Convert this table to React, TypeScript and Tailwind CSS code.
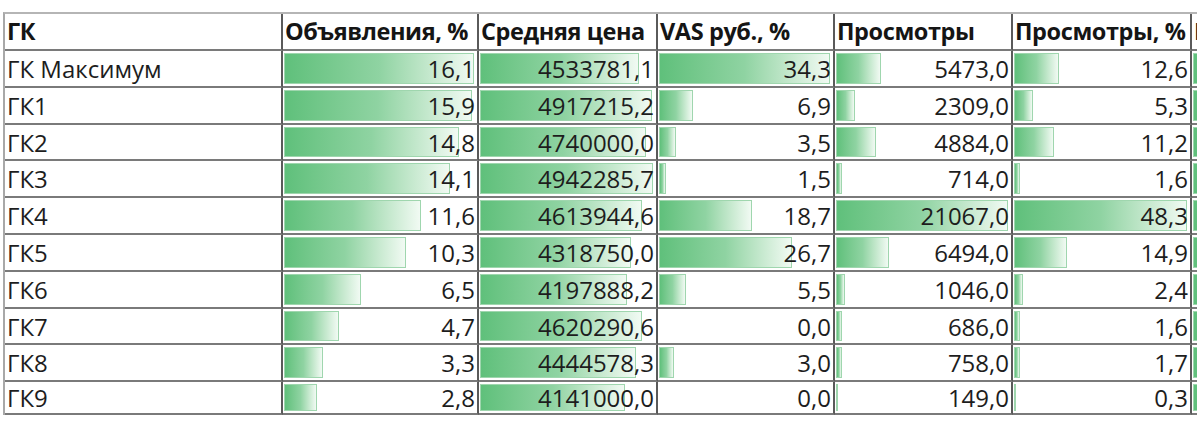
import React from "react";

type Row = [string, number, number, number, number, number, number];

const rows: Row[] = [
  ["ГК Максимум", 16.1, 4533781.1, 34.3, 5473.0, 12.6, 0.6],
  ["ГК1", 15.9, 4917215.2, 6.9, 2309.0, 5.3, 0.6],
  ["ГК2", 14.8, 4740000.0, 3.5, 4884.0, 11.2, 0.6],
  ["ГК3", 14.1, 4942285.7, 1.5, 714.0, 1.6, 0.6],
  ["ГК4", 11.6, 4613944.6, 18.7, 21067.0, 48.3, 0.6],
  ["ГК5", 10.3, 4318750.0, 26.7, 6494.0, 14.9, 0.6],
  ["ГК6", 6.5, 4197888.2, 5.5, 1046.0, 2.4, 0.6],
  ["ГК7", 4.7, 4620290.6, 0.0, 686.0, 1.6, 0.6],
  ["ГК8", 3.3, 4444578.3, 3.0, 758.0, 1.7, 0.6],
  ["ГК9", 2.8, 4141000.0, 0.0, 149.0, 0.3, 0.6],
];

const headers = [
  "ГК",
  "Объявления, %",
  "Средняя цена",
  "VAS руб., %",
  "Просмотры",
  "Просмотры, %",
  "Просмотры, руб",
];

const widths = [278, 196, 179, 177, 178, 179, 200];
const rowHeights = [37, 37, 36, 37, 37, 37, 37, 36, 37, 33];

const fmt = (v: number) => v.toFixed(1).replace(".", ",");

export default function App() {
  const maxes = [1, 2, 3, 4, 5, 6].map((c) =>
    Math.max(...rows.map((r) => r[c] as number))
  );
  const font = { fontFamily: '"Open Sans", "Noto Sans", sans-serif' };
  return (
    <div className="w-[1197px] h-[425px] overflow-hidden bg-white" style={font}>
      <div className="ml-[3px] mt-[12px] w-[1400px]">
        <div className="grid grid-cols-[278px_196px_179px_177px_178px_179px_200px] border-t-2 border-l-2 border-t-[#b5b5b5] border-l-[#a8a8a8]">
          {headers.map((h) => (
            <div
              key={h}
              className="h-[37px] border-r-2 border-b-2 border-r-[#5a5a5a] border-b-[#7a7a7a] flex items-center pl-[2px] overflow-hidden whitespace-nowrap text-[23.5px] font-bold text-[#151515] tracking-[-0.4px]"
            >
              {h}
            </div>
          ))}
          {rows.map((r, ri) => (
            <React.Fragment key={r[0]}>
              <div
                className="border-r-2 border-b-2 border-r-[#5a5a5a] border-b-[#7a7a7a] flex items-center pl-[2px] pt-[1px] text-[24px] text-[#1d1d1d] whitespace-nowrap"
                style={{ height: rowHeights[ri] }}
              >
                {r[0]}
              </div>
              {[1, 2, 3, 4, 5, 6].map((c) => {
                const v = r[c] as number;
                const maxLen = widths[c] - 6;
                const len = v > 0 ? Math.max(1.5, (v / maxes[c - 1]) * maxLen) : 0;
                return (
                  <div
                    key={c}
                    className="relative border-r-2 border-b-2 border-r-[#5a5a5a] border-b-[#7a7a7a] flex items-center justify-end pr-[2px] pt-[1px] text-[24px] text-[#1d1d1d] whitespace-nowrap"
                    style={{ height: rowHeights[ri] }}
                  >
                    {len > 0 && (
                      <div
                        className="absolute left-[1px] top-[2px] bottom-[2px] border border-[#9fd6ae] bg-linear-to-r from-[#5fc07b] via-[#8fd3a2] to-[#f1faf3]"
                        style={{ width: len }}
                      />
                    )}
                    {c < 6 && <span className="relative">{fmt(v)}</span>}
                  </div>
                );
              })}
            </React.Fragment>
          ))}
        </div>
      </div>
    </div>
  );
}
